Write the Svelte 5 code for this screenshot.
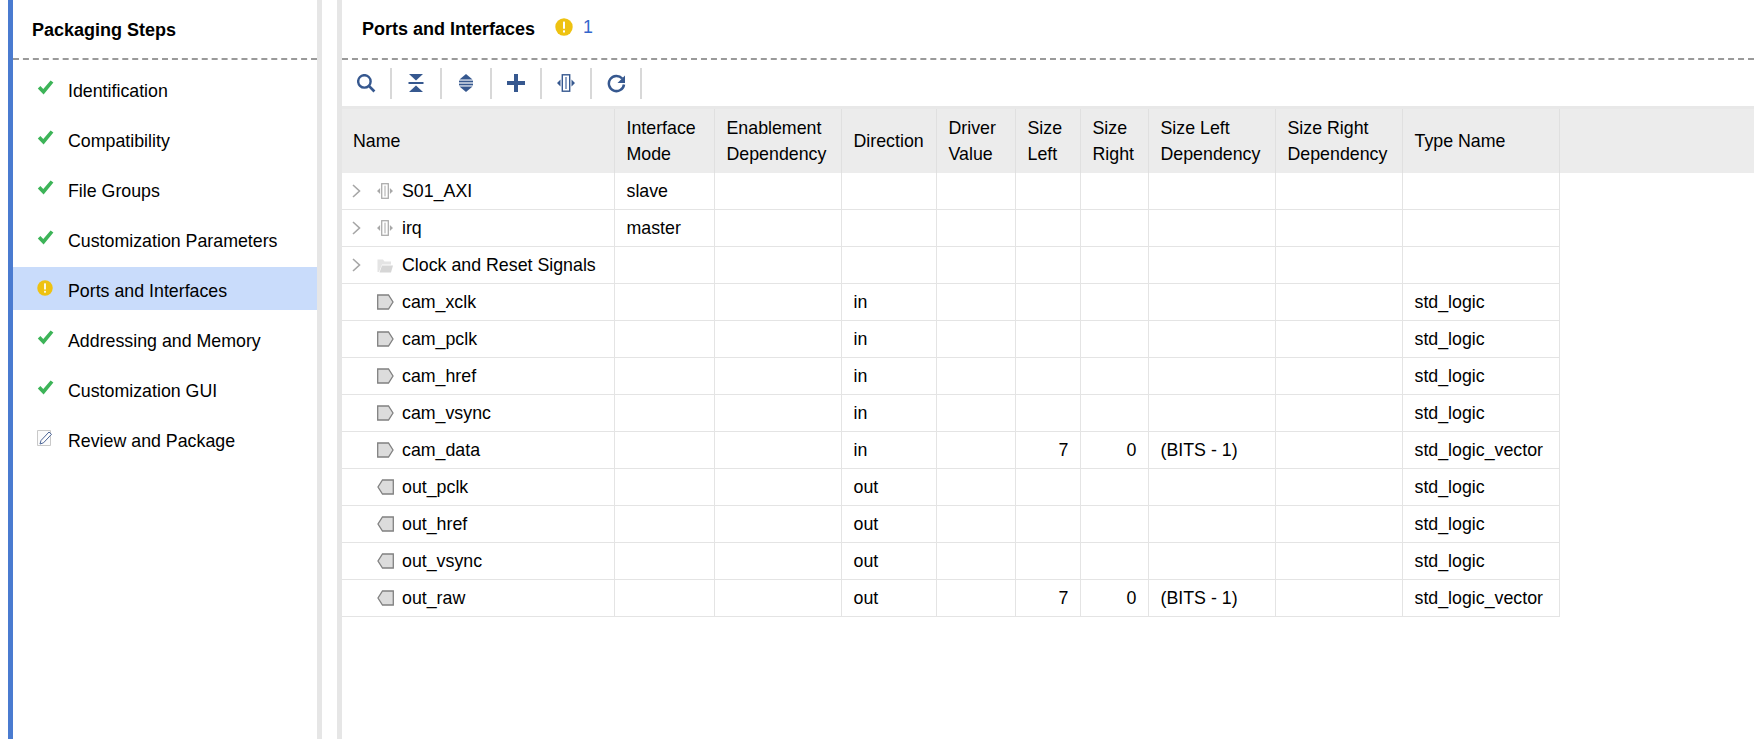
<script>
  const steps = [
    { label: 'Identification', icon: 'check' },
    { label: 'Compatibility', icon: 'check' },
    { label: 'File Groups', icon: 'check' },
    { label: 'Customization Parameters', icon: 'check' },
    { label: 'Ports and Interfaces', icon: 'warn', active: true },
    { label: 'Addressing and Memory', icon: 'check' },
    { label: 'Customization GUI', icon: 'check' },
    { label: 'Review and Package', icon: 'edit' }
  ];
  const widths = [272, 100, 127, 95, 79, 65, 68, 127, 127, 157];
  const heads = [
    ['Name'], ['Interface', 'Mode'], ['Enablement', 'Dependency'], ['Direction'], ['Driver', 'Value'],
    ['Size', 'Left'], ['Size', 'Right'], ['Size Left', 'Dependency'], ['Size Right', 'Dependency'], ['Type Name']
  ];
  const rows = [
    { name: 'S01_AXI', kind: 'bus', mode: 'slave' },
    { name: 'irq', kind: 'bus', mode: 'master' },
    { name: 'Clock and Reset Signals', kind: 'folder' },
    { name: 'cam_xclk', kind: 'in', dir: 'in', type: 'std_logic' },
    { name: 'cam_pclk', kind: 'in', dir: 'in', type: 'std_logic' },
    { name: 'cam_href', kind: 'in', dir: 'in', type: 'std_logic' },
    { name: 'cam_vsync', kind: 'in', dir: 'in', type: 'std_logic' },
    { name: 'cam_data', kind: 'in', dir: 'in', left: '7', right: '0', dep: '(BITS - 1)', type: 'std_logic_vector' },
    { name: 'out_pclk', kind: 'out', dir: 'out', type: 'std_logic' },
    { name: 'out_href', kind: 'out', dir: 'out', type: 'std_logic' },
    { name: 'out_vsync', kind: 'out', dir: 'out', type: 'std_logic' },
    { name: 'out_raw', kind: 'out', dir: 'out', left: '7', right: '0', dep: '(BITS - 1)', type: 'std_logic_vector' }
  ];
</script>

{#snippet warn(size)}
  <svg width={size} height={size} viewBox="0 0 18 18">
    <circle cx="9" cy="9" r="8.700" fill="#eec211" />
    <rect x="8" y="3.600" width="2" height="7.200" rx="0.600" fill="#fff" />
    <rect x="8" y="12.200" width="2" height="2.200" rx="0.500" fill="#fff" />
  </svg>
{/snippet}

{#snippet busIcon(size, color, bar)}
  <svg width={size} height={size} viewBox="0 0 18 18">
    <rect x="5.300" y="0.800" width="7.400" height="16.400" fill="#fff" stroke={color} stroke-width="1.400" />
    <rect x="8" y="3" width="2" height="12" fill={bar} />
    <path d="M3.500 5.500v7L0 9zM14.500 5.500v7L18 9z" fill={color} />
  </svg>
{/snippet}

<div class="page">
  <aside class="steps">
    <h2 class="steps-title">Packaging Steps</h2>
    <ul>
      {#each steps as s}
        <li class:active={s.active}>
          <span class="step-icon">
            {#if s.icon === 'check'}
              <svg width="17" height="15" viewBox="0 0 17 15"><path d="M0.800 8.400l2.600-2.400 2.900 3L13.600 0.400l2.800 2L6.600 14.600z" fill="#3db458" /></svg>
            {:else if s.icon === 'warn'}
              {@render warn(16)}
            {:else}
              <svg width="16" height="16" viewBox="0 0 16 16">
                <path d="M0.500 0.500h13v15h-13z" fill="#fbfbfb" stroke="#c9c9c9" />
                <path d="M3 14l1-3.500 8-8.500 2.500 2.300-8 8.500z" fill="#fff" stroke="#4a6395" stroke-width="1" />
              </svg>
            {/if}
          </span>
          <span class="step-label">{s.label}</span>
        </li>
      {/each}
    </ul>
  </aside>

  <main class="content">
    <header class="title">
      <h2>Ports and Interfaces</h2>
      {@render warn(18)}
      <span class="count">1</span>
    </header>

    <div class="toolbar">
      <button aria-label="Search">
        <svg width="19" height="19" viewBox="0 0 18 18"><circle cx="7" cy="7" r="5.900" fill="none" stroke="#36588f" stroke-width="2.300" /><path d="M11.500 11.500l5 5" stroke="#36588f" stroke-width="2.600" /></svg>
      </button>
      <button aria-label="Collapse all">
        <svg width="16" height="18" viewBox="0 0 16 18" fill="#36588f"><path d="M1 0h14L8 6.500z" /><rect x="0.500" y="8" width="15" height="2" /><path d="M1 18h14L8 11.500z" /></svg>
      </button>
      <button aria-label="Expand all">
        <svg width="14" height="18" viewBox="0 0 14 18" fill="#36588f"><path d="M0.500 5.500L7 0l6.500 5.500z" /><rect x="0" y="6.600" width="14" height="1.800" /><rect x="0" y="9.600" width="14" height="1.800" /><path d="M0.500 12.500h13L7 18z" /></svg>
      </button>
      <button aria-label="Add">
        <svg width="18" height="18" viewBox="0 0 18 18" fill="#36588f"><rect x="7" y="0" width="4" height="18" /><rect x="0" y="7" width="18" height="4" /></svg>
      </button>
      <button aria-label="Add bus interface">
        {@render busIcon(18, '#36588f', '#8fa3c4')}
      </button>
      <button aria-label="Refresh">
        <svg width="19" height="19" viewBox="0 0 19 19"><path d="M15.200 4.500A7.600 7.600 0 1 0 17 10.500" fill="none" stroke="#36588f" stroke-width="2.500" /><path d="M18 1.500v7.500h-7.500z" fill="#36588f" /></svg>
      </button>
    </div>

    <div class="table-wrap">
      <table>
        <colgroup>
          {#each widths as w}<col style="width:{w}px" />{/each}
        </colgroup>
        <thead>
          <tr>
            {#each heads as h}
              <th>{#each h as line}<div>{line}</div>{/each}</th>
            {/each}
          </tr>
        </thead>
        <tbody>
          {#each rows as r}
            <tr>
              <td class="name">
                <div class="name-cell">
                  <span class="chev">
                    {#if r.kind === 'bus' || r.kind === 'folder'}
                      <svg width="9" height="14" viewBox="0 0 9 14"><path d="M1 1l6.500 6-6.500 6" fill="none" stroke="#a6a6a6" stroke-width="1.600" /></svg>
                    {/if}
                  </span>
                  <span class="kind">
                    {#if r.kind === 'bus'}
                      {@render busIcon(16, '#a8a8a8', '#cfcfcf')}
                    {:else if r.kind === 'folder'}
                      <svg width="16" height="15" viewBox="0 0 16 15"><path d="M0.500 14V1.500h5.500l1.500 2H14v3H5L2 14z" fill="#e4e4e4" /><path d="M2.500 14.500l2.500-7h11l-2 7z" fill="#d6d6d6" /></svg>
                    {:else if r.kind === 'in'}
                      <svg width="17" height="16" viewBox="0 0 17 16"><path d="M0.700 1h10.800L16 8l-4.500 7H0.700z" fill="#dcdcdc" stroke="#808080" stroke-width="1.300" /></svg>
                    {:else}
                      <svg width="17" height="16" viewBox="0 0 17 16"><path d="M16.300 1H5.500L1 8l4.500 7h10.800z" fill="#dcdcdc" stroke="#808080" stroke-width="1.300" /></svg>
                    {/if}
                  </span>
                  <span>{r.name}</span>
                </div>
              </td>
              <td>{r.mode ?? ''}</td>
              <td></td>
              <td>{r.dir ?? ''}</td>
              <td></td>
              <td class="num">{r.left ?? ''}</td>
              <td class="num">{r.right ?? ''}</td>
              <td>{r.dep ?? ''}</td>
              <td></td>
              <td>{r.type ?? ''}</td>
            </tr>
          {/each}
        </tbody>
      </table>
    </div>
  </main>
</div>

<style>
  :global(body) {
    margin: 0;
    background: #fff;
  }
  .page {
    display: flex;
    height: 739px;
    overflow: hidden;
    font-family: "Liberation Sans", Arial, sans-serif;
    font-size: 17.8px;
    color: #000;
    background: #fff;
  }
  .steps {
    width: 304px;
    margin-left: 8px;
    border-left: 5px solid #4a7bd0;
    border-right: 5px solid #e6e6e6;
    flex: none;
  }
  .steps-title {
    margin: 0;
    height: 60px;
    box-sizing: border-box;
    padding: 0 0 0 19px;
    border-bottom: 2px dashed #9a9a9a;
    font-size: 18px;
    line-height: 61px;
    font-weight: bold;
  }
  ul {
    list-style: none;
    margin: 7px 0 0;
    padding: 0;
  }
  li {
    display: flex;
    align-items: center;
    height: 43px;
    margin-bottom: 7px;
    padding-left: 24px;
  }
  li.active {
    background: #c9dcfb;
  }
  .step-icon {
    width: 31px;
    height: 20px;
    display: flex;
    align-items: center;
    margin-bottom: 2px;
  }
  .step-label {
    padding-top: 5px;
  }
  .content {
    flex: 1;
    min-width: 0;
    margin-left: 15px;
    border-left: 5px solid #e6e6e6;
  }
  .title {
    height: 60px;
    box-sizing: border-box;
    border-bottom: 2px dashed #9a9a9a;
    display: flex;
    align-items: center;
    padding-left: 20px;
  }
  .title h2 {
    margin: 1px 20px 0 0;
    font-size: 18px;
    font-weight: bold;
  }
  .title svg {
    margin-bottom: 5px;
  }
  .count {
    color: #3366cc;
    margin-left: 10px;
    margin-bottom: 3px;
  }
  .toolbar {
    height: 46px;
    display: flex;
    align-items: center;
    box-sizing: border-box;
  }
  .toolbar button {
    all: unset;
    width: 48px;
    height: 31px;
    border-right: 2px solid #d8d8d8;
    display: flex;
    align-items: center;
    justify-content: center;
  }
  .table-wrap {
    border-top: 3px solid #e8e8e8;
    background: linear-gradient(#ececec 64px, #fff 64px);
  }
  table {
    border-collapse: collapse;
    table-layout: fixed;
    width: 1217px;
  }
  th {
    height: 64px;
    box-sizing: border-box;
    padding: 0 0 1px 12px;
    font-weight: normal;
    text-align: left;
    line-height: 26px;
    border-right: 1px solid #e0e0e0;
    background: #ececec;
  }
  th:first-child {
    padding-left: 11px;
  }
  td {
    height: 36px;
    padding: 0 12px;
    border: 1px solid #e4e4e4;
    border-top: none;
    overflow: hidden;
    white-space: nowrap;
  }
  td:first-child {
    border-left: none;
  }
  td.name {
    padding: 0 0 0 8px;
  }
  td.num {
    text-align: right;
    padding-right: 11px;
  }
  .name-cell {
    display: flex;
    align-items: center;
  }
  .chev {
    width: 27px;
    display: flex;
    padding-left: 2px;
    box-sizing: border-box;
  }
  .kind {
    width: 25px;
    display: flex;
    align-items: center;
  }
</style>
